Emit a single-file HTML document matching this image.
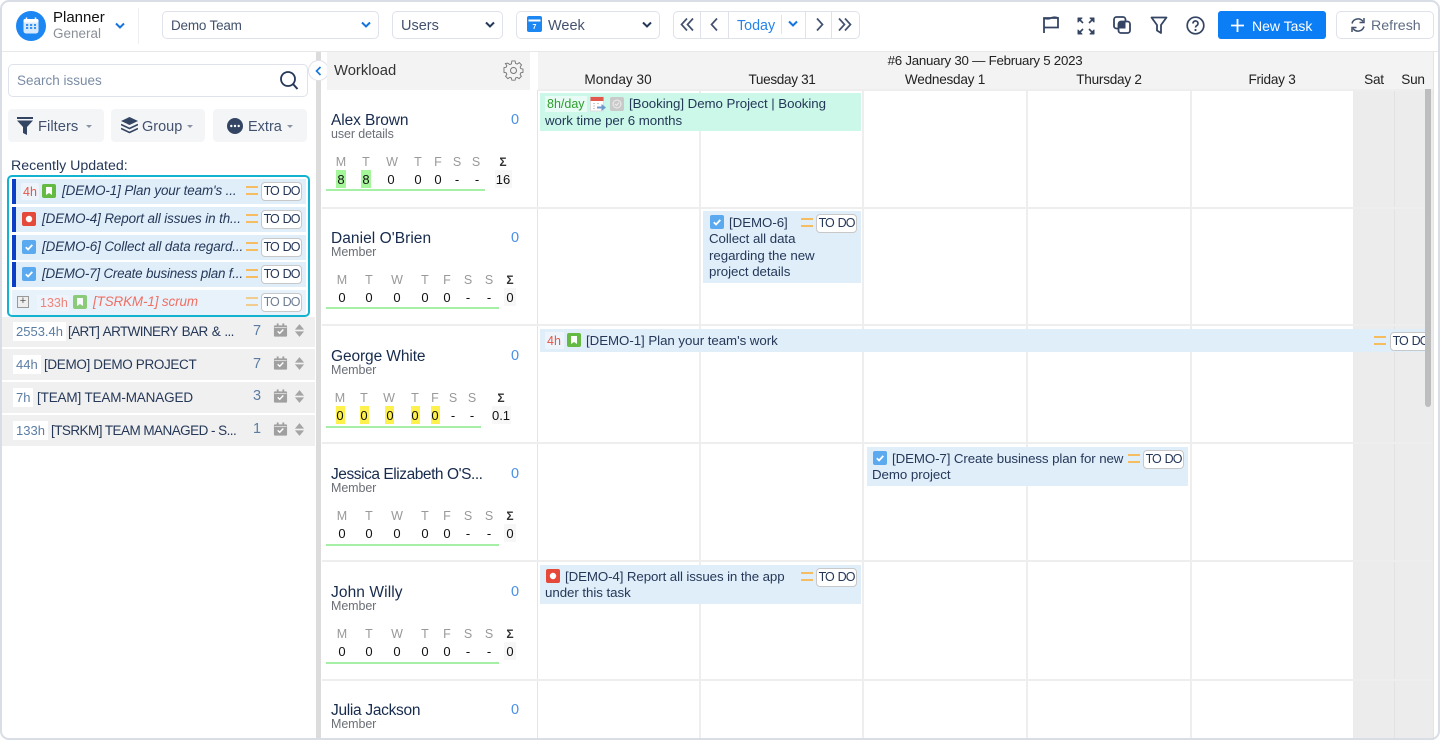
<!DOCTYPE html>
<html><head><meta charset="utf-8"><title>Planner</title>
<style>
html,body{margin:0;padding:0;background:#fff}
body{width:1440px;height:740px;position:relative;overflow:hidden;font-family:"Liberation Sans",sans-serif;color:#253858;font-size:14px}
.a,.t,.c,svg.i{position:absolute}
.t,.c{white-space:nowrap;line-height:16px}
.c{transform:translateX(-50%)}
.b{position:absolute;box-sizing:border-box;background:#fff;border:1.5px solid #dfe2ea;border-radius:5px}
.sel{font-size:14.5px;color:#42526e}
.btn{position:absolute;background:#f4f5f7;border-radius:4px;height:33px;top:109px}
.dd{position:absolute;top:125px;width:0;height:0;border:3px solid transparent;border-top:3px solid #8993a4}
.h{font-size:13.6px;color:#222;letter-spacing:-.25px}
.n{font-size:15.5px;color:#172b4d;letter-spacing:-.1px}
.s{font-size:12.5px;color:#6b6f76;letter-spacing:-.1px}
.z{font-size:14.5px;color:#4a90e2}
.l{font-size:12.5px;color:#999}
.v{font-size:13px;color:#111}
.sg{font-size:12px;color:#333;font-weight:bold}
.g{position:absolute;height:2px;background:#a6efa6;left:326px}
.vl{position:absolute;top:90px;bottom:0;width:2px;background:#eee}
.hl{position:absolute;left:322px;width:1111px;height:2px;background:#eee}
.ev{position:absolute;background:#e0eefa}
.td{position:absolute;box-sizing:border-box;height:19px;background:#fff;border:1px solid #c8c8c8;border-radius:4px;font-size:12.5px;letter-spacing:-1px;word-spacing:1.5px;line-height:17px;text-align:center;color:#253858;width:41px}
.pr{position:absolute;width:12px;height:9px;box-sizing:border-box;border-top:2px solid #f6bd60;border-bottom:2px solid #f6bd60}
.r{position:absolute;left:12px;width:294px;height:25px;background:#e0eefa}
.r i{position:absolute;left:0;top:0;width:4px;height:25px;background:#0b3fc6}
.rt{font-style:italic;font-size:13.4px;color:#253858;letter-spacing:-.1px}
.p{position:absolute;left:2px;width:313px;height:30px;background:#f0f0f0}
.pt{font-size:13.5px;color:#253858}
.h2{position:absolute;background:#fff;height:19px;line-height:19px;font-size:13px;color:#5b7da3;padding:0 3px}
.pn{font-size:14.5px;color:#5b7da3}
.e{font-size:13.3px;color:#253858;line-height:16.5px;letter-spacing:-.05px;margin-top:1px}
</style></head><body>
<svg width="0" height="0" style="position:absolute"><defs>
<symbol id="bm" viewBox="0 0 14 14"><rect width="14" height="14" rx="2" fill="#65ba43"/><path d="M4 3h6v8L7 9l-3 2z" fill="#fff"/></symbol>
<symbol id="bug" viewBox="0 0 14 14"><rect width="14" height="14" rx="2" fill="#e5493a"/><circle cx="7" cy="7" r="3.2" fill="#fff"/></symbol>
<symbol id="ck" viewBox="0 0 14 14"><rect width="14" height="14" rx="2" fill="#5ba9ef"/><path d="M3.8 7.2l2.3 2.3 4.2-4.6" fill="none" stroke="#fff" stroke-width="1.8"/></symbol>
<symbol id="cal" viewBox="0 0 16 16"><path d="M1 4a1 1 0 0 1 1-1h12a1 1 0 0 1 1 1v10a1 1 0 0 1-1 1H2a1 1 0 0 1-1-1z" fill="#a0a0a0"/><rect x="4" y="1" width="2" height="3" fill="#a0a0a0"/><rect x="10" y="1" width="2" height="3" fill="#a0a0a0"/><path d="M1.500 5.500h13" stroke="#eee" stroke-width=".8"/><path d="M5 9.500l2.200 2 3.800-4" fill="none" stroke="#fff" stroke-width="1.500"/></symbol>
<symbol id="ud" viewBox="0 0 12 16"><path d="M6 1l5 6H1zM6 15L1 9h10z" fill="#a5a5a5"/></symbol>
</defs></svg>

<!-- header -->
<div class="a" style="left:0;top:51px;width:1440px;height:1px;background:#e8e8e8"></div>
<svg class="i" style="left:16px;top:11px" width="30" height="30" viewBox="0 0 30 30"><circle cx="15" cy="15" r="15" fill="#1c86f2"/><rect x="7.500" y="8" width="15" height="14.500" rx="2.500" fill="#d7e9fd"/><rect x="7.500" y="8" width="15" height="3.500" rx="1.500" fill="#fff"/><path d="M10.500 6.500v3M19.500 6.500v3" stroke="#fff" stroke-width="1.500"/><path d="M10 14h2.200M14 14h2.200M18 14h2M10 17h2.200M14 17h2.200M18 17h2" stroke="#1c86f2" stroke-width="1.800"/></svg>
<div class="t" style="left:53px;top:10px;font-size:15px;color:#111">Planner</div>
<div class="t" style="left:53px;top:26px;font-size:13.500px;color:#8a8f98">General</div>
<svg class="i" style="left:114px;top:22px" width="12" height="8" viewBox="0 0 12 8"><path d="M2 1.500l4 4 4-4" fill="none" stroke="#1574dd" stroke-width="2"/></svg>
<div class="a" style="left:138px;top:8px;width:1px;height:36px;background:#eceef2"></div>

<div class="b" style="left:162px;top:11px;height:28px;width:217px"></div>
<div class="t sel" style="left:171px;top:18px;font-size:13.500px;letter-spacing:-.2px">Demo Team</div>
<svg class="i" style="left:360px;top:21px" width="12" height="8" viewBox="0 0 12 8"><path d="M2 1.500l4 4 4-4" fill="none" stroke="#1574dd" stroke-width="2"/></svg>
<div class="b" style="left:392px;top:11px;width:111px;height:28px"></div>
<div class="t sel" style="left:401px;top:18px">Users</div>
<svg class="i" style="left:484px;top:21px" width="12" height="8" viewBox="0 0 12 8"><path d="M2 1.500l4 4 4-4" fill="none" stroke="#253858" stroke-width="2"/></svg>
<div class="b" style="left:516px;top:11px;width:144px;height:28px"></div>
<svg class="i" style="left:527px;top:16px" width="15" height="16" viewBox="0 0 15 16"><rect width="15" height="16" rx="2" fill="#1c86f2"/><rect x="1.500" y="3.500" width="12" height="2" fill="#fff"/><text x="7.500" y="13" font-size="7" fill="#fff" text-anchor="middle" font-family="Liberation Sans" font-weight="bold">7</text></svg>
<div class="t sel" style="left:548px;top:18px">Week</div>
<svg class="i" style="left:641px;top:21px" width="12" height="8" viewBox="0 0 12 8"><path d="M2 1.500l4 4 4-4" fill="none" stroke="#253858" stroke-width="2"/></svg>

<div class="b" style="left:673px;top:11px;width:187px;height:28px"></div>
<div class="a" style="left:700px;top:12px;width:1px;height:26px;background:#dfe2ea"></div>
<div class="a" style="left:728px;top:12px;width:1px;height:26px;background:#dfe2ea"></div>
<div class="a" style="left:781px;top:15px;width:1px;height:19px;background:#dfe2ea"></div>
<div class="a" style="left:805px;top:12px;width:1px;height:26px;background:#dfe2ea"></div>
<div class="a" style="left:831px;top:12px;width:1px;height:26px;background:#dfe2ea"></div>
<svg class="i" style="left:680px;top:17px" width="14" height="15" viewBox="0 0 14 15"><path d="M7 1.500L1.500 7.500 7 13.500M13 1.500L7.500 7.500 13 13.500" fill="none" stroke="#42526e" stroke-width="1.700"/></svg>
<svg class="i" style="left:710px;top:17px" width="9" height="15" viewBox="0 0 9 15"><path d="M7 1.500L1.500 7.500 7 13.500" fill="none" stroke="#42526e" stroke-width="1.700"/></svg>
<div class="t" style="left:737px;top:18px;font-size:14.300px;color:#2684e8">Today</div>
<svg class="i" style="left:787px;top:20px" width="12" height="8" viewBox="0 0 12 8"><path d="M2 1.500l4 4 4-4" fill="none" stroke="#1574dd" stroke-width="2"/></svg>
<svg class="i" style="left:815px;top:17px" width="9" height="15" viewBox="0 0 9 15"><path d="M2 1.500L7.500 7.500 2 13.500" fill="none" stroke="#42526e" stroke-width="1.700"/></svg>
<svg class="i" style="left:838px;top:17px" width="14" height="15" viewBox="0 0 14 15"><path d="M1 1.500L6.500 7.500 1 13.500M7 1.500L12.500 7.500 7 13.500" fill="none" stroke="#42526e" stroke-width="1.700"/></svg>

<svg class="i" style="left:1042px;top:16px" width="18" height="18" viewBox="0 0 18 18"><path d="M2 17V2h14v9.500H2M2 2q3.500 1.500 7 0t7 0" fill="none" stroke="#344563" stroke-width="1.800"/></svg>
<svg class="i" style="left:1077px;top:17px" width="18" height="18" viewBox="0 0 18 18"><path d="M1 5V1h4zM17 5V1h-4zM1 13v4h4zM17 13v4h-4z" fill="#344563" stroke="#344563" stroke-linejoin="round"/><path d="M3 3l3 3M15 3l-3 3M3 15l3-3M15 15l-3-3" stroke="#344563" stroke-width="1.600"/></svg>
<svg class="i" style="left:1113px;top:16px" width="18" height="18" viewBox="0 0 18 18"><rect x="1" y="1" width="11.500" height="11.500" rx="2.500" fill="none" stroke="#344563" stroke-width="1.800"/><rect x="5.500" y="5.500" width="11.500" height="11.500" rx="2.500" fill="#fff" stroke="#344563" stroke-width="1.800"/><rect x="5.500" y="5.500" width="7" height="7" fill="#344563"/></svg>
<svg class="i" style="left:1150px;top:16px" width="18" height="19" viewBox="0 0 18 19"><path d="M1.500 1.500h15L11 9v8l-4-2.500V9z" fill="none" stroke="#344563" stroke-width="1.800" stroke-linejoin="round"/></svg>
<svg class="i" style="left:1186px;top:16px" width="19" height="19" viewBox="0 0 19 19"><circle cx="9.500" cy="9.500" r="8.300" fill="none" stroke="#344563" stroke-width="1.700"/><path d="M7 7.500a2.500 2.500 0 1 1 3.600 2.200c-.8.500-1.100.9-1.100 1.800" fill="none" stroke="#344563" stroke-width="1.700"/><circle cx="9.500" cy="14" r="1.100" fill="#344563"/></svg>

<div class="a" style="left:1218px;top:11px;width:108px;height:28px;background:#0b7df5;border-radius:3px"></div>
<svg class="i" style="left:1231px;top:19px" width="13" height="13" viewBox="0 0 13 13"><path d="M6.500 0v13M0 6.500h13" stroke="#fff" stroke-width="1.800"/></svg>
<div class="t" style="left:1252px;top:18px;font-size:14px;color:#fff">New Task</div>
<div class="b" style="left:1336px;top:11px;width:98px;height:28px"></div>
<svg class="i" style="left:1350px;top:17px" width="16" height="16" viewBox="0 0 16 16"><path d="M2 6.500A6.200 6.200 0 0 1 13 4.500M14 9.500A6.200 6.200 0 0 1 3 11.500" fill="none" stroke="#42526e" stroke-width="1.500"/><path d="M14 1v4.500H9.500M2 15v-4.500h4.500" fill="none" stroke="#42526e" stroke-width="1.500"/></svg>
<div class="t" style="left:1371px;top:18px;font-size:14.200px;color:#5e6c84">Refresh</div>

<!-- sidebar -->
<div class="b" style="left:8px;top:64px;height:33px;width:300px"></div>
<div class="t" style="left:17px;top:73px;font-size:13.500px;color:#7a8ca5">Search issues</div>
<svg class="i" style="left:279px;top:70px" width="20" height="21" viewBox="0 0 20 21"><circle cx="9" cy="9" r="7" fill="none" stroke="#253858" stroke-width="1.800"/><path d="M14 14l4.500 5" stroke="#253858" stroke-width="2"/></svg>

<div class="btn" style="left:8px;width:96px"></div>
<svg class="i" style="left:17px;top:117px" width="16" height="18" viewBox="0 0 16 18"><path d="M0 0h16v2H0zM0 3.500h16L10 10v8l-4-2v-6z" fill="#344563"/></svg>
<div class="t" style="left:38px;top:119px;font-size:14.800px;color:#42526e">Filters</div>
<div class="dd" style="left:86px"></div>
<div class="btn" style="left:111px;width:94px"></div>
<svg class="i" style="left:121px;top:117px" width="17" height="17" viewBox="0 0 17 17"><path d="M8.500 0L17 4 8.500 8 0 4z" fill="#344563"/><path d="M0 7.500l8.500 4 8.500-4M0 11.500l8.500 4 8.500-4" fill="none" stroke="#344563" stroke-width="1.600"/></svg>
<div class="t" style="left:142px;top:119px;font-size:14.500px;color:#42526e">Group</div>
<div class="dd" style="left:187px"></div>
<div class="btn" style="left:213px;width:94px"></div>
<svg class="i" style="left:227px;top:118px" width="16" height="16" viewBox="0 0 16 16"><circle cx="8" cy="8" r="8" fill="#344563"/><circle cx="4.300" cy="8" r="1.200" fill="#fff"/><circle cx="8" cy="8" r="1.200" fill="#fff"/><circle cx="11.700" cy="8" r="1.200" fill="#fff"/></svg>
<div class="t" style="left:248px;top:119px;font-size:14.500px;color:#42526e">Extra</div>
<div class="dd" style="left:287px"></div>

<div class="t" style="left:11px;top:158px;font-size:14.200px;color:#253858">Recently Updated:</div>

<div class="r" style="top:179px"><i></i></div>
<div class="r" style="top:207px"><i></i></div>
<div class="r" style="top:235px"><i></i></div>
<div class="r" style="top:262px"><i></i></div>
<div class="r" style="top:290px;background:#e8f2fb"></div>
<div class="a" style="left:7px;top:175px;width:303px;height:142px;box-sizing:border-box;border:2.500px solid #12b3d0;border-radius:5px"></div>

<div class="a" style="left:21px;top:183px;width:18px;height:17px;background:#eef4fb;border-radius:2px"></div>
<div class="t" style="left:23px;top:184px;font-size:12.500px;color:#e5574a">4h</div>
<svg class="i" style="left:42px;top:184px" width="14" height="14"><use href="#bm"/></svg>
<div class="t rt" style="left:62px;top:183px">[DEMO-1] Plan your team's ...</div>
<div class="pr" style="left:246px;top:186px"></div><div class="td" style="left:261px;top:182px">TO DO</div>

<svg class="i" style="left:22px;top:212px" width="14" height="14"><use href="#bug"/></svg>
<div class="t rt" style="left:42px;top:211px">[DEMO-4] Report all issues in th...</div>
<div class="pr" style="left:246px;top:214px"></div><div class="td" style="left:261px;top:210px">TO DO</div>

<svg class="i" style="left:22px;top:240px" width="14" height="14"><use href="#ck"/></svg>
<div class="t rt" style="left:42px;top:239px">[DEMO-6] Collect all data regard...</div>
<div class="pr" style="left:246px;top:242px"></div><div class="td" style="left:261px;top:238px">TO DO</div>

<svg class="i" style="left:22px;top:267px" width="14" height="14"><use href="#ck"/></svg>
<div class="t rt" style="left:42px;top:266px;letter-spacing:-.2px">[DEMO-7] Create business plan f...</div>
<div class="pr" style="left:246px;top:269px"></div><div class="td" style="left:261px;top:265px">TO DO</div>

<div class="a" style="left:17px;top:296px;width:10px;height:10px;border:1px solid #999;background:#eee"></div>
<div class="t" style="left:17px;top:293px;width:12px;text-align:center;font-size:11px;color:#555">+</div>
<div class="a" style="left:37px;top:295px;width:32px;height:16px;background:#eef4fb"></div>
<div class="t" style="left:40px;top:295px;font-size:12.500px;color:#ef8379">133h</div>
<svg class="i" style="left:73px;top:295px" width="14" height="14" opacity=".7"><use href="#bm"/></svg>
<div class="t rt" style="left:93px;top:294px;color:#ef6f63">[TSRKM-1] scrum</div>
<div class="pr" style="left:246px;top:297px;opacity:.7"></div><div class="td" style="left:261px;top:293px;color:#6f7d93">TO DO</div>

<div class="p" style="top:317px"></div>
<div class="h2" style="left:13px;top:322px">2553.4h</div>
<div class="t pt" style="left:68px;top:324px;letter-spacing:-.6px;word-spacing:1px">[ART] ARTWINERY BAR &amp; ...</div>
<div class="t pn" style="left:253px;top:323px">7</div>
<svg class="i" style="left:273px;top:322px" width="15" height="16"><use href="#cal"/></svg>
<svg class="i" style="left:294px;top:323px" width="11" height="15"><use href="#ud"/></svg>

<div class="p" style="top:349px;height:31px"></div>
<div class="h2" style="left:13px;top:355px">44h</div>
<div class="t pt" style="left:44px;top:357px;letter-spacing:-.35px">[DEMO] DEMO PROJECT</div>
<div class="t pn" style="left:253px;top:356px">7</div>
<svg class="i" style="left:273px;top:355px" width="15" height="16"><use href="#cal"/></svg>
<svg class="i" style="left:294px;top:356px" width="11" height="15"><use href="#ud"/></svg>

<div class="p" style="top:382px;height:31px"></div>
<div class="h2" style="left:13px;top:388px">7h</div>
<div class="t pt" style="left:37px;top:390px;letter-spacing:-.15px">[TEAM] TEAM-MANAGED</div>
<div class="t pn" style="left:253px;top:388px">3</div>
<svg class="i" style="left:273px;top:388px" width="15" height="16"><use href="#cal"/></svg>
<svg class="i" style="left:294px;top:389px" width="11" height="15"><use href="#ud"/></svg>

<div class="p" style="top:415px;height:31px"></div>
<div class="h2" style="left:13px;top:421px">133h</div>
<div class="t pt" style="left:51px;top:423px;letter-spacing:-.55px">[TSRKM] TEAM MANAGED - S...</div>
<div class="t pn" style="left:253px;top:421px">1</div>
<svg class="i" style="left:273px;top:421px" width="15" height="16"><use href="#cal"/></svg>
<svg class="i" style="left:294px;top:422px" width="11" height="15"><use href="#ud"/></svg>

<!-- splitter -->
<div class="a" style="left:316px;top:52px;width:5px;height:688px;background:#dcdcdc"></div>
<div class="a" style="left:308px;top:60px;width:21px;height:21px;box-sizing:border-box;background:#fff;border:1px solid #dfe2ea;border-radius:50%"></div>
<svg class="i" style="left:315px;top:66px" width="7" height="10" viewBox="0 0 7 10"><path d="M5.500 1L1.500 5l4 4" fill="none" stroke="#1574dd" stroke-width="1.600"/></svg>

<!-- workload head -->
<div class="a" style="left:327px;top:52px;width:203px;height:38px;background:#f3f3f3"></div>
<div class="t" style="left:334px;top:63px;font-size:14.800px;color:#333">Workload</div>
<svg class="i" style="left:503px;top:60px" width="21" height="21" viewBox="0 0 21 21"><path d="M8.800 1.500h3.400l.5 2.600 1.700.7 2.200-1.500 2.400 2.400-1.500 2.200.7 1.700 2.300.5v3.400l-2.300.5-.7 1.700 1.300 2-2.400 2.400-2-1.300-1.700.7-.5 2.300H8.800l-.5-2.300-1.700-.7-2 1.300-2.400-2.400 1.300-2-.7-1.700-2.300-.5V8.600l2.300-.5.7-1.700-1.500-2.200L4.400 3.800l2.200 1.500 1.700-.7z" fill="none" stroke="#777" stroke-width="1" transform="translate(.5 -.5) scale(.95)"/><circle cx="10.500" cy="10.500" r="3" fill="none" stroke="#777"/></svg>

<!-- grid head -->
<div class="a" style="left:538px;top:52px;width:895px;height:38px;background:#f3f3f3"></div>
<div class="c h" style="left:985px;top:53px;font-size:13.300px">#6 January 30 — February 5 2023</div>
<div class="c h" style="left:618px;top:72px;letter-spacing:0">Monday 30</div>
<div class="c h" style="left:782px;top:72px;letter-spacing:-.35px">Tuesday 31</div>
<div class="c h" style="left:945px;top:72px">Wednesday 1</div>
<div class="c h" style="left:1109px;top:72px">Thursday 2</div>
<div class="c h" style="left:1272px;top:72px">Friday 3</div>
<div class="c h" style="left:1374px;top:72px">Sat</div>
<div class="c h" style="left:1413px;top:72px">Sun</div>

<!-- grid -->
<div class="a" style="left:1353px;top:90px;width:80px;height:650px;background:#ececec"></div>
<div class="vl" style="left:537px;width:1px;background:#e4e4e4"></div>
<div class="vl" style="left:699px"></div>
<div class="vl" style="left:862px"></div>
<div class="vl" style="left:1026px"></div>
<div class="vl" style="left:1190px"></div>
<div class="vl" style="left:1394px;width:1px;background:#e2e2e2"></div>
<div class="a" style="left:1433px;top:52px;width:1px;height:688px;background:#e4e4e4"></div>
<div class="hl" style="top:89px;left:538px;width:895px"></div>
<div class="hl" style="top:207px"></div>
<div class="hl" style="top:324px"></div>
<div class="hl" style="top:442px"></div>
<div class="hl" style="top:560px"></div>
<div class="hl" style="top:679px"></div>

<!-- users -->
<div class="t n" style="left:331px;top:113px">Alex Brown</div>
<div class="t s" style="left:331px;top:126px">user details</div>
<div class="c z" style="left:515px;top:112px">0</div>
<div class="c l" style="left:341px;top:154px">M</div><div class="c l" style="left:366px;top:154px">T</div><div class="c l" style="left:392px;top:154px">W</div><div class="c l" style="left:418px;top:154px">T</div><div class="c l" style="left:438px;top:154px">F</div><div class="c l" style="left:457px;top:154px">S</div><div class="c l" style="left:476px;top:154px">S</div><div class="c sg" style="left:503px;top:154px">Σ</div>
<div class="a" style="left:336px;top:170px;width:10px;height:18px;background:#a5f59b"></div><div class="a" style="left:361px;top:170px;width:10px;height:18px;background:#a5f59b"></div>
<div class="a" style="left:495px;top:170px;width:17px;height:18px;background:#f7f7f7"></div>
<div class="c v" style="left:341px;top:172px">8</div><div class="c v" style="left:366px;top:172px">8</div><div class="c v" style="left:391px;top:172px">0</div><div class="c v" style="left:418px;top:172px">0</div><div class="c v" style="left:438px;top:172px">0</div><div class="c v" style="left:457px;top:172px">-</div><div class="c v" style="left:477px;top:172px">-</div><div class="c v" style="left:503px;top:172px">16</div>
<div class="g" style="top:189px;width:159px"></div>

<div class="t n" style="left:331px;top:231px;letter-spacing:.05px">Daniel O'Brien</div>
<div class="t s" style="left:331px;top:244px">Member</div>
<div class="c z" style="left:515px;top:230px">0</div>
<div class="c l" style="left:342px;top:272px">M</div><div class="c l" style="left:369px;top:272px">T</div><div class="c l" style="left:397px;top:272px">W</div><div class="c l" style="left:425px;top:272px">T</div><div class="c l" style="left:447px;top:272px">F</div><div class="c l" style="left:468px;top:272px">S</div><div class="c l" style="left:489px;top:272px">S</div><div class="c sg" style="left:510px;top:272px">Σ</div>
<div class="a" style="left:504px;top:288px;width:12px;height:18px;background:#f7f7f7"></div>
<div class="c v" style="left:342px;top:290px">0</div><div class="c v" style="left:369px;top:290px">0</div><div class="c v" style="left:397px;top:290px">0</div><div class="c v" style="left:425px;top:290px">0</div><div class="c v" style="left:447px;top:290px">0</div><div class="c v" style="left:468px;top:290px">-</div><div class="c v" style="left:489px;top:290px">-</div><div class="c v" style="left:510px;top:290px">0</div>
<div class="g" style="top:307px;width:173px"></div>

<div class="t n" style="left:331px;top:349px">George White</div>
<div class="t s" style="left:331px;top:362px">Member</div>
<div class="c z" style="left:515px;top:348px">0</div>
<div class="c l" style="left:340px;top:390px">M</div><div class="c l" style="left:364px;top:390px">T</div><div class="c l" style="left:389px;top:390px">W</div><div class="c l" style="left:415px;top:390px">T</div><div class="c l" style="left:435px;top:390px">F</div><div class="c l" style="left:453px;top:390px">S</div><div class="c l" style="left:472px;top:390px">S</div><div class="c sg" style="left:501px;top:390px">Σ</div>
<div class="a" style="left:336px;top:406px;width:9px;height:18px;background:#fff14d"></div><div class="a" style="left:360px;top:406px;width:9px;height:18px;background:#fff14d"></div><div class="a" style="left:385px;top:406px;width:9px;height:18px;background:#fff14d"></div><div class="a" style="left:411px;top:406px;width:9px;height:18px;background:#fff14d"></div><div class="a" style="left:431px;top:406px;width:9px;height:18px;background:#fff14d"></div>
<div class="a" style="left:492px;top:406px;width:19px;height:18px;background:#f7f7f7"></div>
<div class="c v" style="left:340px;top:408px">0</div><div class="c v" style="left:364px;top:408px">0</div><div class="c v" style="left:390px;top:408px">0</div><div class="c v" style="left:415px;top:408px">0</div><div class="c v" style="left:435px;top:408px">0</div><div class="c v" style="left:453px;top:408px">-</div><div class="c v" style="left:472px;top:408px">-</div><div class="c v" style="left:501px;top:408px">0.1</div>
<div class="g" style="top:426px;width:155px"></div>

<div class="t n" style="left:331px;top:467px;letter-spacing:-.45px">Jessica Elizabeth O'S...</div>
<div class="t s" style="left:331px;top:480px">Member</div>
<div class="c z" style="left:515px;top:466px">0</div>
<div class="c l" style="left:342px;top:508px">M</div><div class="c l" style="left:369px;top:508px">T</div><div class="c l" style="left:397px;top:508px">W</div><div class="c l" style="left:425px;top:508px">T</div><div class="c l" style="left:447px;top:508px">F</div><div class="c l" style="left:468px;top:508px">S</div><div class="c l" style="left:489px;top:508px">S</div><div class="c sg" style="left:510px;top:508px">Σ</div>
<div class="a" style="left:504px;top:524px;width:12px;height:18px;background:#f7f7f7"></div>
<div class="c v" style="left:342px;top:526px">0</div><div class="c v" style="left:369px;top:526px">0</div><div class="c v" style="left:397px;top:526px">0</div><div class="c v" style="left:425px;top:526px">0</div><div class="c v" style="left:447px;top:526px">0</div><div class="c v" style="left:468px;top:526px">-</div><div class="c v" style="left:489px;top:526px">-</div><div class="c v" style="left:510px;top:526px">0</div>
<div class="g" style="top:544px;width:173px"></div>

<div class="t n" style="left:331px;top:585px;letter-spacing:.1px">John Willy</div>
<div class="t s" style="left:331px;top:598px">Member</div>
<div class="c z" style="left:515px;top:584px">0</div>
<div class="c l" style="left:342px;top:626px">M</div><div class="c l" style="left:369px;top:626px">T</div><div class="c l" style="left:397px;top:626px">W</div><div class="c l" style="left:425px;top:626px">T</div><div class="c l" style="left:447px;top:626px">F</div><div class="c l" style="left:468px;top:626px">S</div><div class="c l" style="left:489px;top:626px">S</div><div class="c sg" style="left:510px;top:626px">Σ</div>
<div class="a" style="left:504px;top:642px;width:12px;height:18px;background:#f7f7f7"></div>
<div class="c v" style="left:342px;top:644px">0</div><div class="c v" style="left:369px;top:644px">0</div><div class="c v" style="left:397px;top:644px">0</div><div class="c v" style="left:425px;top:644px">0</div><div class="c v" style="left:447px;top:644px">0</div><div class="c v" style="left:468px;top:644px">-</div><div class="c v" style="left:489px;top:644px">-</div><div class="c v" style="left:510px;top:644px">0</div>
<div class="g" style="top:662px;width:173px"></div>

<div class="t n" style="left:331px;top:703px;letter-spacing:-.3px">Julia Jackson</div>
<div class="t s" style="left:331px;top:716px">Member</div>
<div class="c z" style="left:515px;top:702px">0</div>

<!-- events -->
<div class="a" style="left:540px;top:93px;width:321px;height:38px;background:#ccf8ea"></div>
<div class="a" style="left:545px;top:96px;width:42px;height:16px;background:#e8fbf5"></div>
<div class="t" style="left:547px;top:96px;font-size:12.500px;color:#2e9e2e">8h/day</div>
<svg class="i" style="left:590px;top:96px" width="16" height="17" viewBox="0 0 16 17"><rect x=".5" y="1" width="13" height="14" fill="#fff" stroke="#ddd"/><rect x=".5" y="1" width="13" height="4" fill="#e0594c"/><path d="M3 7.500h2M7 7.500h2M3 10h2M3 12.500h2" stroke="#ccc"/><path d="M7 10.500h4.500V8l4.500 3.500-4.500 3.500v-2.500H7z" fill="#6f9ac9"/></svg>
<svg class="i" style="left:610px;top:97px" width="14" height="14" viewBox="0 0 14 14"><rect width="14" height="14" rx="2" fill="#c9c9c9"/><circle cx="7" cy="7" r="4" fill="none" stroke="#eee"/><path d="M5 7l1.500 1.500L9 5.500" fill="none" stroke="#eee"/></svg>
<div class="t e" style="left:629px;top:95px">[Booking] Demo Project | Booking</div>
<div class="t e" style="left:545px;top:112px">work time per 6 months</div>

<div class="ev" style="left:703px;top:211px;width:158px;height:72px"></div>
<svg class="i" style="left:710px;top:215px" width="14" height="14"><use href="#ck"/></svg>
<div class="t e" style="left:729px;top:214px">[DEMO-6]</div>
<div class="pr" style="left:801px;top:218px"></div><div class="td" style="left:816px;top:214px">TO DO</div>
<div class="t e" style="left:709px;top:230px">Collect all data</div>
<div class="t e" style="left:709px;top:247px">regarding the new</div>
<div class="t e" style="left:709px;top:263px">project details</div>

<div class="ev" style="left:540px;top:329px;width:892px;height:23px"></div>
<div class="a" style="left:545px;top:332px;width:19px;height:17px;background:#eef4fb"></div>
<div class="t" style="left:547px;top:333px;font-size:12.500px;color:#e5574a">4h</div>
<svg class="i" style="left:567px;top:333px" width="14" height="14"><use href="#bm"/></svg>
<div class="t e" style="left:586px;top:332px">[DEMO-1] Plan your team's work</div>
<div class="pr" style="left:1374px;top:336px"></div><div class="td" style="left:1390px;top:332px">TO DO</div>

<div class="ev" style="left:867px;top:447px;width:321px;height:39px"></div>
<svg class="i" style="left:873px;top:451px" width="14" height="14"><use href="#ck"/></svg>
<div class="t e" style="left:892px;top:450px;letter-spacing:-.1px">[DEMO-7] Create business plan for new</div>
<div class="pr" style="left:1128px;top:454px"></div><div class="td" style="left:1143px;top:450px">TO DO</div>
<div class="t e" style="left:872px;top:466px">Demo project</div>

<div class="ev" style="left:540px;top:565px;width:321px;height:39px"></div>
<svg class="i" style="left:546px;top:569px" width="14" height="14"><use href="#bug"/></svg>
<div class="t e" style="left:565px;top:568px;letter-spacing:-.1px">[DEMO-4] Report all issues in the app</div>
<div class="pr" style="left:801px;top:572px"></div><div class="td" style="left:816px;top:568px">TO DO</div>
<div class="t e" style="left:545px;top:584px">under this task</div>

<!-- scrollbar -->
<div class="a" style="left:1425px;top:89px;width:6px;height:318px;background:#bdbdbd;border-radius:0 0 4px 4px"></div>

<!-- frame -->
<div class="a" style="left:0;top:0;width:1440px;height:740px;box-sizing:border-box;border:2px solid #d9dde6;border-radius:9px"></div>
</body></html>
